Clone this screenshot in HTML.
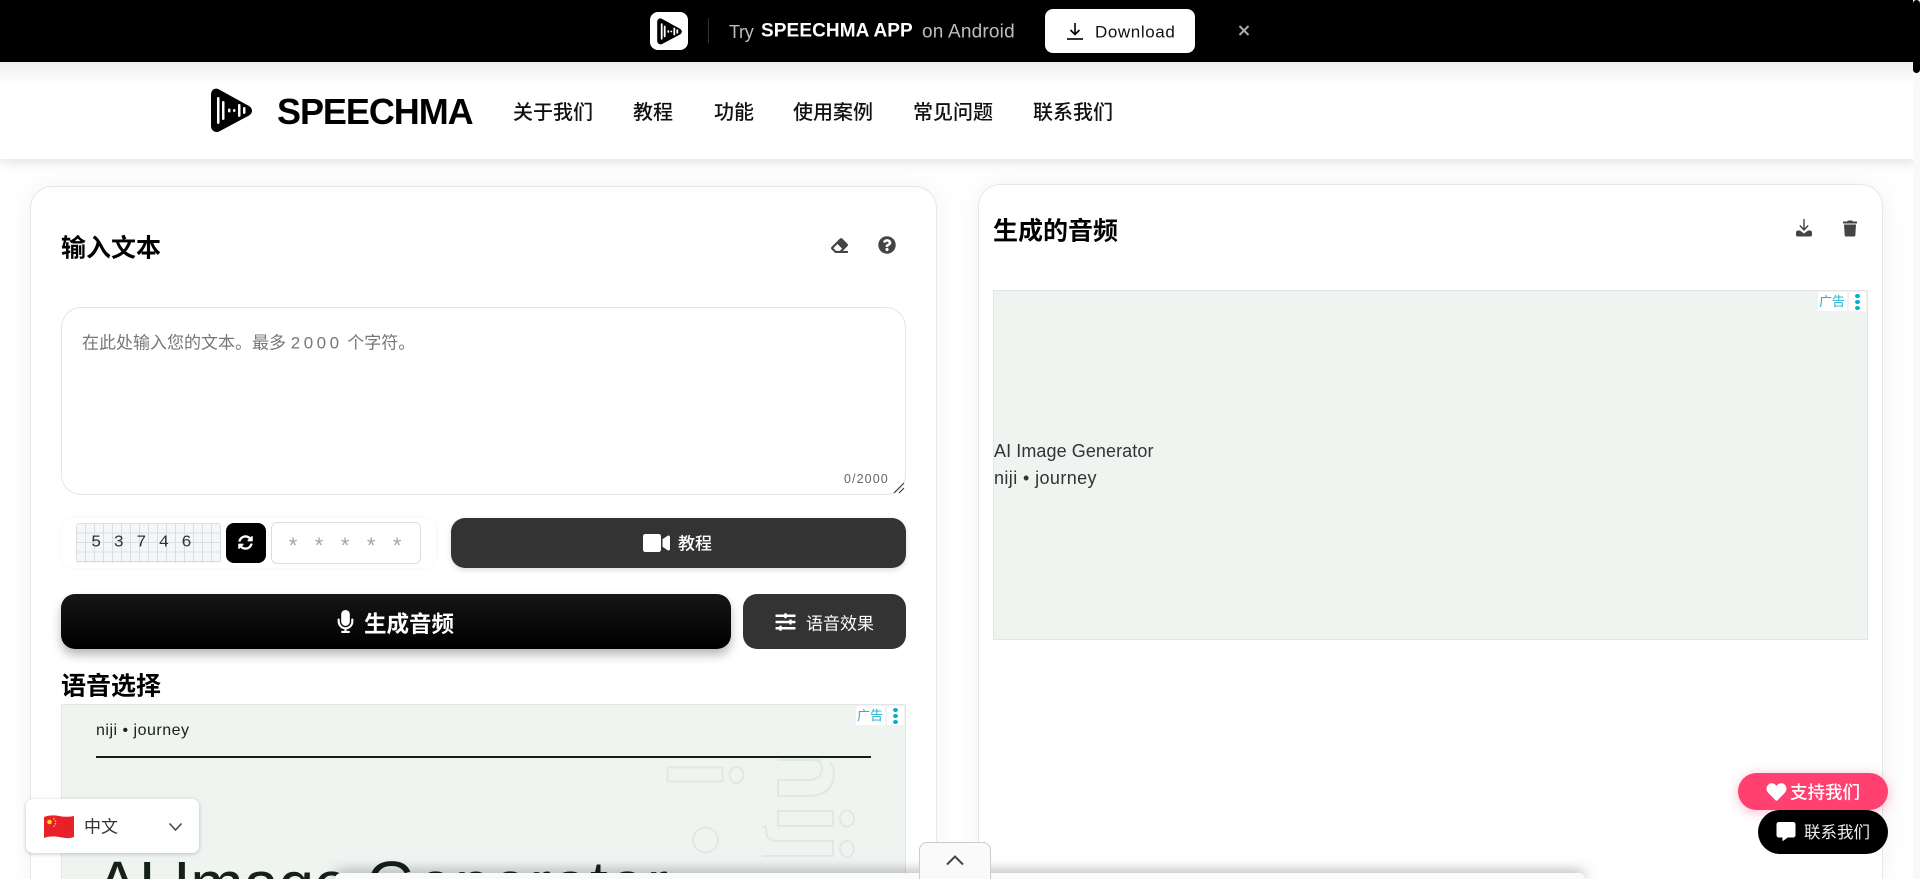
<!DOCTYPE html>
<html lang="zh"><head><meta charset="utf-8"><title>SPEECHMA</title>
<style>
*{box-sizing:border-box}
html,body{margin:0;padding:0;width:1920px;height:879px;overflow:hidden;background:#fff}
body{font-family:"Liberation Sans","Noto Sans CJK SC",sans-serif;color:#000}
#w{position:absolute;left:0;top:0;width:1920px;height:879px;overflow:hidden}
.a{position:absolute;white-space:nowrap}
.t{line-height:1;transform:translateY(-50%)}
svg{display:block;position:absolute}
.card{position:absolute;background:#fff;border:1px solid #e6e7e8;border-bottom:0;border-radius:22px 22px 0 0;box-shadow:0 0 28px rgba(0,0,0,.055)}
.h{font-weight:700;font-size:25px}
.nav{font-size:20px;font-weight:500;color:#111;top:113px}
.ad{position:absolute;background:#f0f4f1;border:1px solid #e3e6e5;overflow:hidden}
.ac{position:absolute;right:1px;top:1px;width:48px;height:19px;background:#fff}
.ac span{position:absolute;left:1px;top:3px;font-size:13px;line-height:14px;color:#1bb3d4}
.ac i{position:absolute;left:29px;top:0;width:2px;height:19px;background:#f0f3f1}
.ac b{position:absolute;left:37px;width:5px;height:4px;border-radius:50%;background:#00aecd}
</style></head><body><div id="w">

<!-- main cards -->
<div class="card" style="left:30px;top:186px;width:907px;height:693px"></div>
<div class="card" style="left:978px;top:184px;width:905px;height:695px"></div>

<!-- nav -->
<div class="a" style="left:0;top:62px;width:1920px;height:97px;background:#fff;box-shadow:0 2px 12px rgba(0,0,0,.14)"></div>
<div class="a" style="left:0;top:62px;width:1920px;height:22px;background:linear-gradient(#eee,#fff)"></div>
<svg style="left:211px;top:88px" width="41" height="45" viewBox="0 0 41 45"><path d="M0 7C0 1 5-1 9 2L38 18c4 2.500 4 7 0 9.500L9 43c-4 2.500-9 0-9-5Z" fill="#000"/><g fill="#fff"><rect x="6" y="9" width="2.500" height="27" rx="1.200"/><rect x="11" y="13" width="2.500" height="19" rx="1.200"/><rect x="17" y="20.500" width="2.500" height="4" rx="1.200"/><rect x="22" y="21" width="2.500" height="3" rx="1.200"/><rect x="27" y="16" width="2.500" height="13" rx="1.200"/><rect x="32" y="19" width="2.500" height="7" rx="1.200"/></g></svg>
<div class="a t" style="left:277px;top:112px;font-size:36px;font-weight:700;letter-spacing:-1.050px">SPEECHMA</div>
<div class="a t nav" style="left:513px">关于我们</div>
<div class="a t nav" style="left:633px">教程</div>
<div class="a t nav" style="left:714px">功能</div>
<div class="a t nav" style="left:793px">使用案例</div>
<div class="a t nav" style="left:913px">常见问题</div>
<div class="a t nav" style="left:1033px">联系我们</div>

<!-- top bar -->
<div class="a" style="left:0;top:0;width:1920px;height:62px;background:#000"></div>
<div class="a" style="left:650px;top:12px;width:38px;height:38px;background:#fff;border-radius:8px"></div>
<svg style="left:657px;top:18px" width="25" height="27" viewBox="0 0 41 45"><path d="M0 7C0 1 5-1 9 2L38 18c4 2.500 4 7 0 9.500L9 43c-4 2.500-9 0-9-5Z" fill="#000"/><g fill="#fff"><rect x="6" y="9" width="3" height="27" rx="1.200"/><rect x="11" y="13" width="3" height="19" rx="1.200"/><rect x="17" y="20.500" width="3" height="4" rx="1.200"/><rect x="22" y="21" width="3" height="3" rx="1.200"/><rect x="27" y="16" width="3" height="13" rx="1.200"/><rect x="32" y="19" width="3" height="7" rx="1.200"/></g></svg>
<div class="a" style="left:708px;top:18px;width:1px;height:25px;background:#333"></div>
<div class="a t" style="left:729px;top:32px;font-size:18px;color:#bdbdbd;letter-spacing:-.300px">Try</div>
<div class="a t" style="left:761px;top:31px;font-size:19px;font-weight:700;color:#fff;letter-spacing:.1px">SPEECHMA APP</div>
<div class="a t" style="left:922px;top:32px;font-size:19px;color:#bdbdbd;letter-spacing:.2px">on Android</div>
<div class="a" style="left:1045px;top:9px;width:150px;height:44px;background:#fff;border-radius:8px"></div>
<svg style="left:1066px;top:22px" width="18" height="18" viewBox="0 0 18 18" fill="none" stroke="#000" stroke-width="1.600"><path d="M9 1v11M4.500 8 9 12.500 13.500 8"/><path d="M1 17h16"/></svg>
<div class="a t" style="left:1095px;top:32px;font-size:17px;color:#111;letter-spacing:.6px">Download</div>
<svg style="left:1238px;top:25px" width="12" height="11" viewBox="0 0 12 11" fill="none" stroke="#aaa" stroke-width="2"><path d="M1.500 1 10.500 10M10.500 1 1.500 10"/></svg>

<!-- left card -->
<div class="a t h" style="left:61px;top:249px">输入文本</div>
<svg style="left:830px;top:237px" width="19" height="17" viewBox="0 0 512 512" fill="#444"><path d="M497.941 273.941c18.745-18.745 18.745-49.137 0-67.882l-160-160c-18.745-18.745-49.137-18.745-67.882 0l-256 256c-18.745 18.745-18.745 49.137 0 67.882l96 96A48.004 48.004 0 0 0 144 480h356c6.627 0 12-5.373 12-12v-40c0-6.627-5.373-12-12-12H355.883l142.058-142.059zm-302.627-62.627l137.373 137.373L265.373 416H150.628l-80-80 124.686-124.686z"/></svg>
<svg style="left:878px;top:236px" width="18" height="18" viewBox="0 0 512 512" fill="#444"><path d="M504 256c0 136.997-111.043 248-248 248S8 392.997 8 256C8 119.083 119.043 8 256 8s248 111.083 248 248zM262.655 90c-54.497 0-89.255 22.957-116.549 63.758-3.536 5.286-2.353 12.415 2.715 16.258l34.699 26.31c5.205 3.947 12.621 3.008 16.665-2.122 17.864-22.658 30.113-35.797 57.303-35.797 20.429 0 45.698 13.148 45.698 32.958 0 14.976-12.363 22.667-32.534 33.976C247.128 238.528 216 254.941 216 296v4c0 6.627 5.373 12 12 12h56c6.627 0 12-5.373 12-12v-1.333c0-28.462 83.186-29.647 83.186-106.667 0-58.002-60.165-102-116.531-102zM256 338c-25.365 0-46 20.635-46 46 0 25.364 20.635 46 46 46s46-20.636 46-46c0-25.365-20.635-46-46-46z"/></svg>

<div class="a" style="left:61px;top:307px;width:845px;height:188px;border:1px solid #e3e5e7;border-radius:20px;background:#fff"></div>
<div class="a t" style="left:82px;top:343px;font-size:17px;color:#777">在此处输入您的文本。最多 <span style="letter-spacing:3.500px">2000</span> 个字符。</div>
<div class="a t" style="left:844px;top:479px;font-size:12.500px;color:#666;letter-spacing:1.100px">0/2000</div>
<svg style="left:893px;top:482px" width="12" height="12" viewBox="0 0 12 12" stroke="#333" stroke-width="1.100"><path d="M1 11 11 1M6 11 11 6"/></svg>

<div class="a" style="left:61px;top:518px;width:375px;height:50px;background:#fff;border-radius:12px;box-shadow:0 0 4px rgba(0,0,0,.05)"></div>
<div class="a" style="left:76px;top:523px;width:145px;height:40px;background-color:#f5f6f8;background-image:linear-gradient(#dcdddf 1px,transparent 1px),linear-gradient(90deg,#dcdddf 1px,transparent 1px);background-size:9px 9.500px;border-radius:3px"></div>
<div class="a t" style="left:91px;top:543px;font-family:'Liberation Mono',monospace;font-size:17px;font-weight:400;color:#333;letter-spacing:12.400px">53746</div>
<div class="a" style="left:226px;top:523px;width:40px;height:40px;background:#000;border-radius:8px"></div>
<svg style="left:238px;top:535px" width="15" height="15" viewBox="0 0 512 512" fill="#fff"><path d="M370.72 133.28C339.458 104.008 298.888 87.962 255.848 88c-77.458.068-144.328 53.178-162.791 126.85-1.344 5.363-6.122 9.15-11.651 9.15H24.103c-7.498 0-13.194-6.807-11.807-14.176C33.933 94.924 134.813 8 256 8c66.448 0 126.791 26.136 171.315 68.685L463.03 40.97C478.149 25.851 504 36.559 504 57.941V192c0 13.255-10.745 24-24 24H345.941c-21.382 0-32.09-25.851-16.971-40.971l41.75-41.749zM32 296h134.059c21.382 0 32.09 25.851 16.971 40.971l-41.75 41.75c31.262 29.273 71.835 45.319 114.876 45.28 77.418-.07 144.315-53.144 162.787-126.849 1.344-5.363 6.122-9.15 11.651-9.15h57.304c7.498 0 13.194 6.807 11.807 14.176C478.067 417.076 377.187 504 256 504c-66.448 0-126.791-26.136-171.315-68.685L48.97 471.03C33.851 486.149 8 475.441 8 454.059V320c0-13.255 10.745-24 24-24z"/></svg>
<div class="a" style="left:271px;top:522px;width:150px;height:42px;border:1px solid #ddd;border-radius:6px;background:#fff"></div>
<div class="a t" style="left:288.700px;top:546px;font-size:22px;color:#a5a5a5;letter-spacing:17.500px">*****</div>

<div class="a" style="left:451px;top:518px;width:455px;height:50px;background:#333;border-radius:14px;box-shadow:0 2px 6px rgba(0,0,0,.14)"></div>
<svg style="left:643px;top:531px" width="27" height="24" viewBox="0 0 576 512" fill="#fff"><path d="M336.2 64H47.8C21.4 64 0 85.4 0 111.8v288.4C0 426.6 21.4 448 47.8 448h288.4c26.4 0 47.8-21.4 47.8-47.8V111.8c0-26.4-21.4-47.8-47.8-47.8zm189.4 37.7L416 177.3v157.4l109.6 75.5c21.2 14.6 50.4-.3 50.4-25.8V127.5c0-25.4-29.1-40.4-50.4-25.8z"/></svg>
<div class="a t" style="left:678px;top:544px;font-size:17px;color:#fff;font-weight:500">教程</div>

<div class="a" style="left:61px;top:594px;width:670px;height:55px;background:linear-gradient(#161616,#000);border-radius:14px;box-shadow:0 6px 10px rgba(0,0,0,.28)"></div>
<svg style="left:337px;top:610px" width="17" height="23" viewBox="0 0 352 512" fill="#fff"><path d="M176 352c53.02 0 96-42.98 96-96V96c0-53.02-42.98-96-96-96S80 42.98 80 96v160c0 53.02 42.98 96 96 96zm160-160h-16c-8.840 0-16 7.160-16 16v48c0 74.800-64.490 134.820-140.790 127.380C96.710 376.890 48 317.110 48 250.300V208c0-8.840-7.160-16-16-16H16c-8.840 0-16 7.160-16 16v40.160c0 89.640 63.970 169.550 152 181.690V464H96c-8.840 0-16 7.160-16 16v16c0 8.840 7.160 16 16 16h160c8.840 0 16-7.160 16-16v-16c0-8.840-7.160-16-16-16h-56v-33.770C285.710 418.470 352 344.900 352 256v-48c0-8.840-7.160-16-16-16z"/></svg>
<div class="a t" style="left:364px;top:625px;font-size:22.500px;font-weight:700;color:#fff">生成音频</div>
<div class="a" style="left:743px;top:594px;width:163px;height:55px;background:#333;border-radius:14px"></div>
<svg style="left:775px;top:612px" width="21" height="20" viewBox="0 0 512 512" fill="#fff"><path d="M496 384H160v-16c0-8.800-7.200-16-16-16h-32c-8.800 0-16 7.200-16 16v16H16c-8.800 0-16 7.200-16 16v32c0 8.800 7.200 16 16 16h80v16c0 8.800 7.200 16 16 16h32c8.800 0 16-7.200 16-16v-16h336c8.800 0 16-7.200 16-16v-32c0-8.800-7.200-16-16-16zm0-160h-80v-16c0-8.800-7.200-16-16-16h-32c-8.800 0-16 7.200-16 16v16H16c-8.800 0-16 7.200-16 16v32c0 8.800 7.200 16 16 16h336v16c0 8.800 7.200 16 16 16h32c8.800 0 16-7.200 16-16v-16h80c8.800 0 16-7.200 16-16v-32c0-8.800-7.200-16-16-16zm0-160H288V48c0-8.800-7.200-16-16-16h-32c-8.800 0-16 7.200-16 16v16H16C7.200 64 0 71.200 0 80v32c0 8.800 7.200 16 16 16h208v16c0 8.800 7.200 16 16 16h32c8.800 0 16-7.200 16-16v-16h208c8.800 0 16-7.200 16-16V80c0-8.800-7.200-16-16-16z"/></svg>
<div class="a t" style="left:806px;top:624px;font-size:17px;color:#fff">语音效果</div>

<div class="a t h" style="left:61px;top:687px">语音选择</div>

<div class="ad" style="left:61px;top:704px;width:845px;height:175px;border-bottom:0">
 <div class="ac"><span>广告</span><i></i><b style="top:2px"></b><b style="top:8px"></b><b style="top:14px"></b></div>
 <div class="a t" style="left:34px;top:26px;font-size:16px;color:#16201b;letter-spacing:.5px">niji • journey</div>
 <div class="a" style="left:34px;top:51px;width:775px;height:2px;background:#141e19"></div>
 <svg style="left:-62px;top:-705px" width="906" height="879" viewBox="0 0 906 879" fill="none" stroke="#e0e8e4" stroke-width="2"><rect x="667.500" y="767.500" width="55" height="14"/><ellipse cx="736.500" cy="775" rx="7" ry="8"/><path d="M778 760H822M830 762Q834 768 834 772Q834 796 808 796H778V780H808Q822 780 822 768Q822 762 815 760"/><rect x="778" y="811" width="55" height="15"/><ellipse cx="847" cy="818.500" rx="7" ry="8"/><circle cx="705.500" cy="840" r="12.500"/><path d="M762 827h4c0 8 0 14 12 14h55v15h-71"/><ellipse cx="847" cy="849" rx="7" ry="8"/></svg>
 <div class="a" style="left:34px;top:147px;height:27px;overflow:hidden;font-size:64px;line-height:64px;font-weight:400;color:#16201b;letter-spacing:-.4px">AI Image <span style="letter-spacing:1.700px">Generator</span></div>
</div>

<!-- right card -->
<div class="a t h" style="left:993px;top:232px">生成的音频</div>
<svg style="left:1795px;top:219px" width="18" height="18" viewBox="0 0 18 18" fill="#444"><path d="M8.300 0h1.400v9l3-3 1 1L9 12 4.300 7l1-1 3 3Z"/><path d="M1 13.500c0-1 .8-2 2-2h2L9 14.500 13 11.500h2c1.200 0 2 1 2 2V16c0 .8-.6 1.500-1.500 1.500h-13C1.600 17.500 1 16.800 1 16Z"/></svg>
<svg style="left:1843px;top:220px" width="14" height="17" viewBox="0 0 448 512" fill="#444"><path d="M432 32H312l-9.400-18.700A24 24 0 0 0 281.100 0H166.800a23.720 23.720 0 0 0-21.400 13.300L136 32H16A16 16 0 0 0 0 48v32a16 16 0 0 0 16 16h416a16 16 0 0 0 16-16V48a16 16 0 0 0-16-16zM53.200 467a48 48 0 0 0 47.900 45h245.800a48 48 0 0 0 47.900-45L416 128H32z"/></svg>
<div class="ad" style="left:993px;top:290px;width:875px;height:350px">
 <div class="ac"><span>广告</span><i></i><b style="top:2px"></b><b style="top:8px"></b><b style="top:14px"></b></div>
 <div class="a t" style="left:0;top:160px;font-size:18px;color:#333;letter-spacing:.08px">AI Image Generator</div>
 <div class="a t" style="left:0;top:187px;font-size:18px;color:#333;letter-spacing:.4px">niji • journey</div>
</div>

<!-- bottom sticky -->
<div class="a" style="left:335px;top:873px;width:1250px;height:6px;background:#fafafa;border-radius:10px 10px 0 0;box-shadow:0 0 14px rgba(0,0,0,.55)"></div>
<div class="a" style="left:919px;top:842px;width:72px;height:37px;background:#fafafa;border:1px solid #ccc;border-bottom:0;border-radius:8px 8px 0 0"></div>
<svg style="left:945px;top:854px" width="20" height="12" viewBox="0 0 20 12" fill="none" stroke="#444" stroke-width="2"><path d="M2 10.500 10 2.500 18 10.500"/></svg>

<!-- language -->
<div class="a" style="left:26px;top:799px;width:173px;height:54px;background:#fff;border-radius:7px;box-shadow:0 1px 5px rgba(0,0,0,.22)"></div>
<svg style="left:44px;top:815px" width="30" height="24" viewBox="0 0 30 24"><path d="M0 2c5-2 10-2 15-1s10 1 15 0v21c-5 2-10 1-15 0s-10-1-15 1Z" fill="#e8202a"/><g fill="#ffd52e"><circle cx="5.500" cy="7" r="2.300"/><circle cx="10" cy="3.800" r=".8"/><circle cx="11.500" cy="6" r=".8"/><circle cx="11.500" cy="8.800" r=".8"/><circle cx="10" cy="11" r=".8"/></g></svg>
<div class="a t" style="left:84px;top:827px;font-size:17px;color:#333">中文</div>
<svg style="left:168px;top:822px" width="15" height="10" viewBox="0 0 15 10" fill="none" stroke="#444" stroke-width="1.500"><path d="M1.500 1.500 7.500 8 13.500 1.500"/></svg>

<!-- floats -->
<div class="a" style="left:1738px;top:773px;width:150px;height:37px;background:#ff4070;border-radius:19px;box-shadow:0 2px 12px rgba(255,64,112,.35)"></div>
<svg style="left:1766px;top:782px" width="21" height="20" viewBox="0 0 512 512" fill="#fff"><path d="M462.300 62.600C407.500 15.900 326 24.300 275.700 76.200L256 96.500l-19.700-20.300C186.100 24.300 104.500 15.900 49.700 62.600c-62.800 53.600-66.100 149.800-9.900 207.900l193.500 199.800c12.500 12.900 32.800 12.900 45.300 0l193.500-199.800c56.300-58.100 53-154.300-9.800-207.900z"/></svg>
<div class="a t" style="left:1790px;top:793px;font-size:17.500px;color:#fff;font-weight:500">支持我们</div>
<div class="a" style="left:1758px;top:810px;width:130px;height:44px;background:#000;border-radius:22px"></div>
<svg style="left:1776px;top:822px" width="20" height="19" viewBox="0 0 512 512" fill="#fff"><path d="M448 0H64C28.700 0 0 28.700 0 64v288c0 35.300 28.700 64 64 64h96v84c0 9.800 11.200 15.500 19.100 9.700L304 416h144c35.300 0 64-28.700 64-64V64c0-35.300-28.700-64-64-64z"/></svg>
<div class="a t" style="left:1804px;top:833px;font-size:16.500px;color:#eee">联系我们</div>

<!-- scrollbar -->
<div class="a" style="left:1913px;top:0;width:7px;height:879px;background:#f8f9fb"></div>
<div class="a" style="left:1913px;top:0;width:7px;height:73px;background:#000;border-radius:4px"></div>
</div></body></html>
